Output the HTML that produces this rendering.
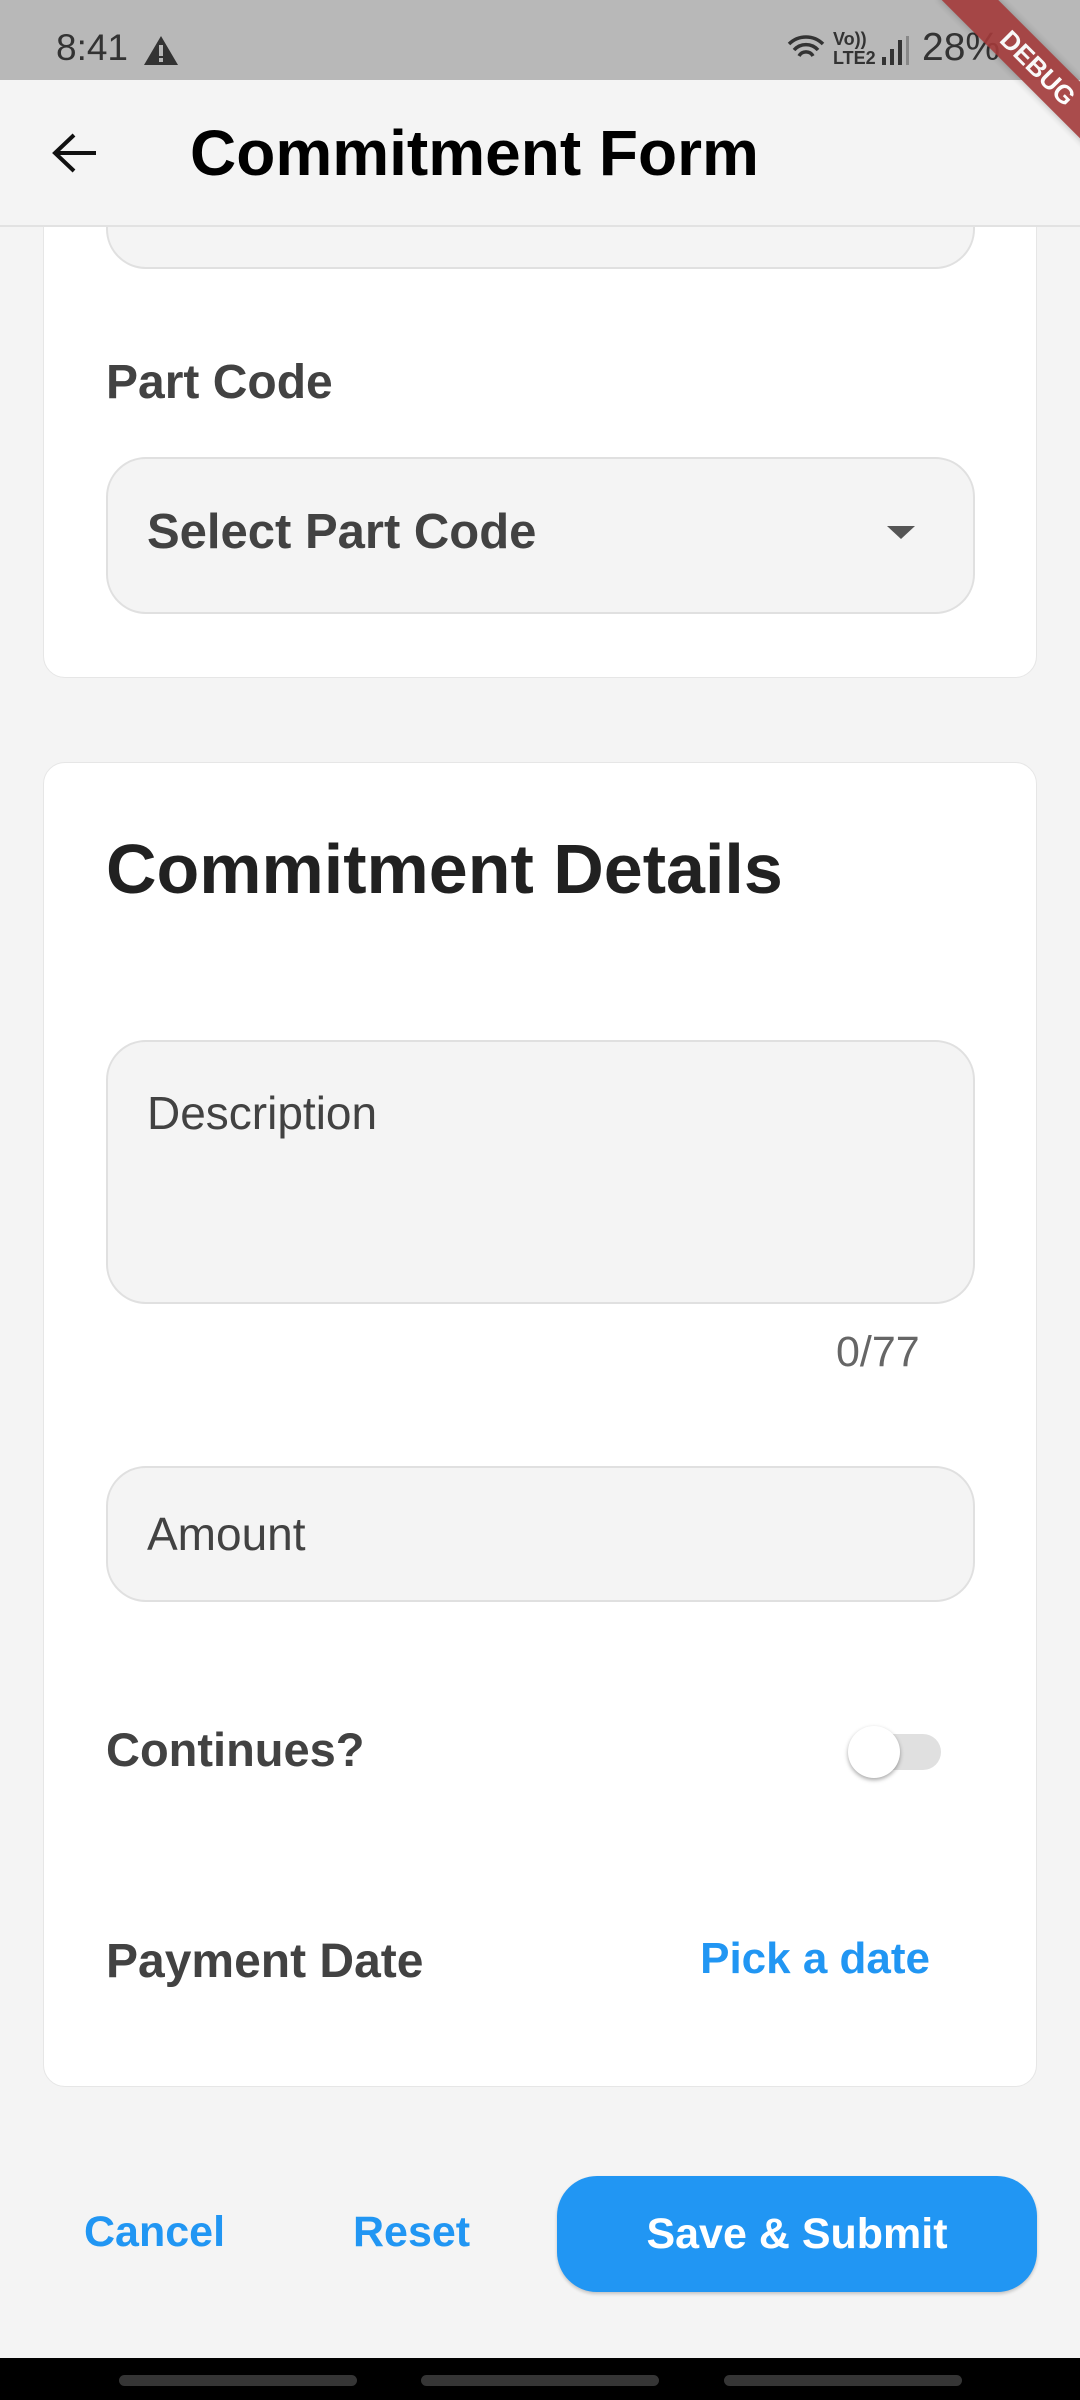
<!DOCTYPE html>
<html><head><meta charset="utf-8"><style>
*{margin:0;padding:0;box-sizing:border-box}
body{width:1080px;height:2400px;background:#f4f4f4;position:relative;overflow:hidden;font-family:"Liberation Sans",sans-serif;color:#424242}
.a{position:absolute;white-space:nowrap}
.card{position:absolute;background:#fff;border-radius:22px;left:43px;width:994px;border:1px solid #e6e6e6}
.field{position:absolute;background:#f4f4f4;border:2px solid #e0e0e0;border-radius:40px;left:106px;width:869px}
</style></head><body>
<div class="card" style="top:-40px;height:718px"></div>
<div class="field" style="top:150px;height:119px"></div>
<div class="a" style="left:106px;top:355px;font-size:48px;font-weight:bold">Part Code</div>
<div class="field" style="top:457px;height:157px"></div>
<div class="a" style="left:147px;top:504px;font-size:49px;font-weight:bold">Select Part Code</div>
<svg class="a" style="left:885px;top:524px" width="32" height="16"><path d="M2 2h28L16 15z" fill="#555"/></svg>

<div class="card" style="top:762px;height:1325px"></div>
<div class="a" style="left:106px;top:829px;font-size:70px;font-weight:bold;color:#212121">Commitment Details</div>
<div class="field" style="top:1040px;height:264px"></div>
<div class="a" style="left:147px;top:1086px;font-size:46px;color:#424242">Description</div>
<div class="a" style="left:836px;top:1328px;font-size:43px;color:#666">0/77</div>
<div class="field" style="top:1466px;height:136px"></div>
<div class="a" style="left:147px;top:1507px;font-size:46px;color:#424242">Amount</div>
<div class="a" style="left:106px;top:1722px;font-size:47px;font-weight:bold">Continues?</div>
<div class="a" style="left:851px;top:1734px;width:90px;height:36px;border-radius:18px;background:#e0e0e0"></div>
<div class="a" style="left:848px;top:1726px;width:52px;height:52px;border-radius:50%;background:#fff;box-shadow:0 2px 4px rgba(0,0,0,.35)"></div>
<div class="a" style="left:106px;top:1934px;font-size:48px;font-weight:bold">Payment Date</div>
<div class="a" style="right:150px;top:1934px;font-size:44px;font-weight:bold;color:#2196f3">Pick a date</div>

<div class="a" style="left:84px;top:2208px;font-size:43px;font-weight:bold;color:#2196f3">Cancel</div>
<div class="a" style="left:353px;top:2208px;font-size:43px;font-weight:bold;color:#2196f3">Reset</div>
<div class="a" style="left:557px;top:2176px;width:480px;height:116px;border-radius:40px;background:#2196f3;color:#fff;font-size:43px;font-weight:bold;text-align:center;line-height:116px;box-shadow:0 2px 3px rgba(0,0,0,.2)">Save &amp; Submit</div>

<div class="a" style="left:0;top:2358px;width:1080px;height:42px;background:#000"></div>
<div class="a" style="left:119px;top:2375px;width:238px;height:11px;border-radius:6px;background:#353535"></div>
<div class="a" style="left:421px;top:2375px;width:238px;height:11px;border-radius:6px;background:#353535"></div>
<div class="a" style="left:724px;top:2375px;width:238px;height:11px;border-radius:6px;background:#353535"></div>

<div class="a" style="left:0;top:80px;width:1080px;height:147px;background:#f4f4f4;border-bottom:2px solid #e2e2e2"></div>
<svg class="a" style="left:50px;top:131px" width="48" height="44"><path d="M46 22H6M24 4L5 22l19 18" fill="none" stroke="#111" stroke-width="4"/></svg>
<div class="a" style="left:190px;top:116px;font-size:64px;font-weight:bold;color:#000">Commitment Form</div>

<div class="a" style="left:0;top:0;width:1080px;height:80px;background:#b8b8b8"></div>
<div class="a" style="left:56px;top:27px;font-size:37px;color:#333">8:41</div>
<svg class="a" style="left:143px;top:34px" width="36" height="32"><path d="M18 2L35 31H1z" fill="#333"/><rect x="16" y="11" width="4" height="11" fill="#b8b8b8"/><rect x="16" y="24" width="4" height="4" fill="#b8b8b8"/></svg>
<svg class="a" style="left:786px;top:32px" width="40" height="36"><path d="M3 12a24 24 0 0 1 34 0M8 18a16 16 0 0 1 24 0M13 24a8 8 0 0 1 14 0" fill="none" stroke="#333" stroke-width="3.5"/></svg>
<div class="a" style="left:833px;top:30px;font-size:18px;font-weight:bold;color:#333;line-height:19px">Vo))<br>LTE2</div>
<svg class="a" style="left:880px;top:34px" width="30" height="32"><rect x="2" y="23" width="4" height="8" fill="#333"/><rect x="10" y="15" width="4" height="16" fill="#333"/><rect x="18" y="6" width="4" height="25" fill="#333"/><rect x="26" y="2" width="3" height="29" fill="#888"/></svg>
<div class="a" style="left:922px;top:26px;font-size:39px;color:#333">28%</div>

<div class="a" style="left:918px;top:48px;width:240px;height:40px;background:#a33a3a;opacity:.9;transform:rotate(45deg);color:#fff;font-size:26px;font-weight:bold;text-align:center;line-height:40px;box-shadow:0 0 8px rgba(0,0,0,.3)">DEBUG</div>
</body></html>
